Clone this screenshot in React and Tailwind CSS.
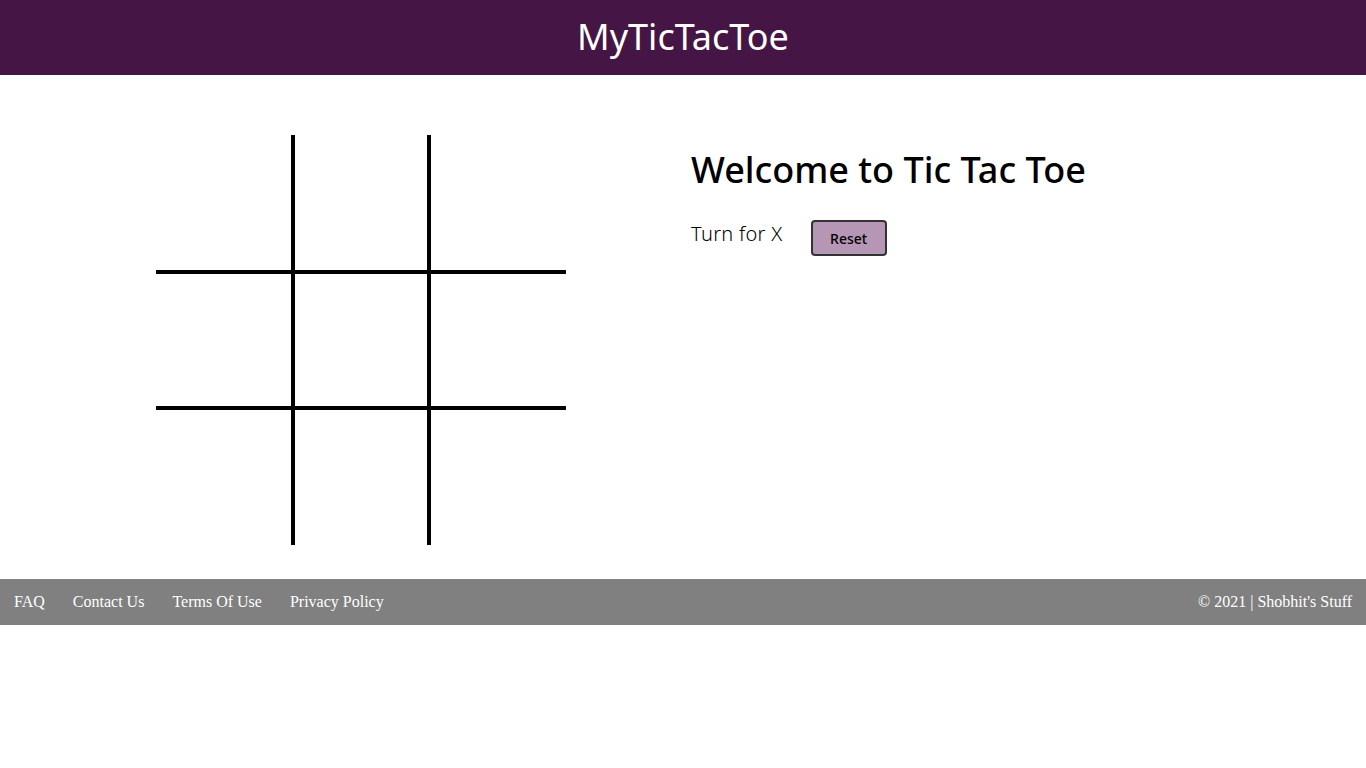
import { useState } from 'react';

const cellBorders = [
  '', 'border-x-4', '',
  'border-y-4', 'border-4', 'border-y-4',
  '', 'border-x-4', '',
];

export default function App() {
  const [board, setBoard] = useState(Array(9).fill(''));
  const [turn, setTurn] = useState('X');

  const play = (i) => {
    if (board[i]) return;
    const next = [...board];
    next[i] = turn;
    setBoard(next);
    setTurn(turn === 'X' ? 'O' : 'X');
  };

  const reset = () => {
    setBoard(Array(9).fill(''));
    setTurn('X');
  };

  return (
    <div className="min-h-screen bg-white">
      {/* header */}
      <header className="h-[75px] bg-[#451546] flex items-center justify-center">
        <h1 className="text-white text-[36px] font-['Noto_Sans',sans-serif] pb-[2px]">MyTicTacToe</h1>
      </header>

      {/* game */}
      <main className="flex pl-[156px] pt-[60px] pb-[34px] font-['Noto_Sans',sans-serif]">
        <div className="grid grid-cols-[135px_140px_135px] grid-rows-[135px_140px_135px]">
          {board.map((v, i) => (
            <div
              key={i}
              onClick={() => play(i)}
              className={`border-black ${cellBorders[i]} flex items-center justify-center text-6xl cursor-pointer`}
            >
              {v}
            </div>
          ))}
        </div>

        <div className="ml-[125px] pt-[12px]">
          <h2 className="text-[36px] font-medium text-black leading-tight">Welcome to Tic Tac Toe</h2>
          <div className="flex items-center mt-[22px]">
            <span className="text-[20px] text-black font-light tracking-[0.3px]">Turn for {turn}</span>
            <button
              onClick={reset}
              className="ml-[28px] mt-[6px] mb-[-2px] w-[76px] h-[36px] bg-[#b597b5] border-2 border-[#333] rounded-[4px] text-[14px] font-medium text-black"
            >
              Reset
            </button>
          </div>
        </div>
      </main>

      {/* footer */}
      <footer className="h-[46px] bg-[#808080] flex items-center justify-between px-[14px] font-['Liberation_Serif',serif] text-white text-[16px]">
        <nav className="flex gap-[28px]">
          <a href="#">FAQ</a>
          <a href="#">Contact Us</a>
          <a href="#">Terms Of Use</a>
          <a href="#">Privacy Policy</a>
        </nav>
        <span>© 2021 | Shobhit's Stuff</span>
      </footer>
    </div>
  );
}
